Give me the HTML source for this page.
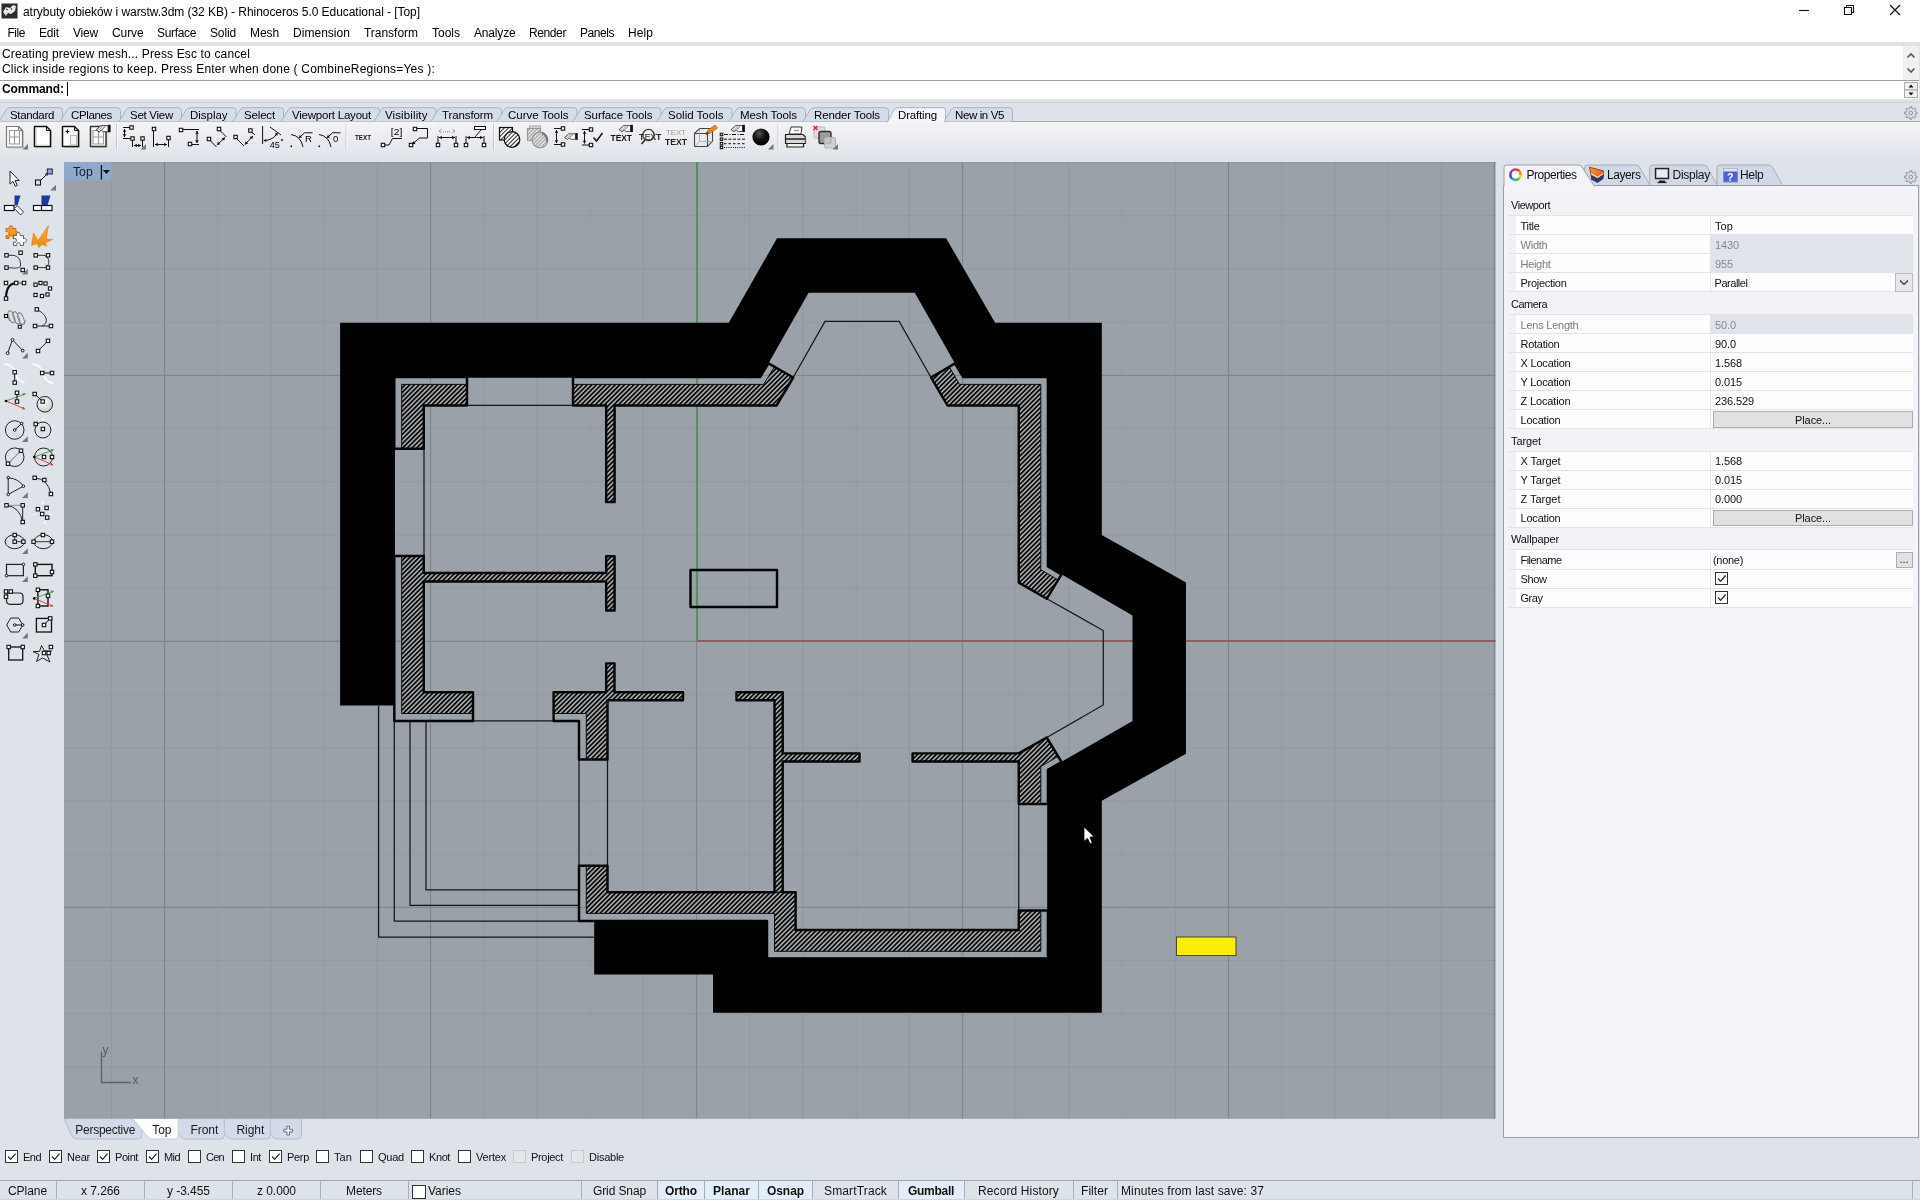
<!DOCTYPE html><html><head><meta charset="utf-8"><title>Rhinoceros 5.0 Educational</title><style>
html,body{margin:0;padding:0}
body{width:1920px;height:1200px;position:relative;overflow:hidden;background:#dee2e9;font-family:"Liberation Sans",sans-serif;font-size:12px;color:#000}
.t{position:absolute;white-space:pre;line-height:20px;height:20px}
.b{position:absolute;box-sizing:border-box}
svg{position:absolute;overflow:visible}
.vp{overflow:hidden}
</style></head><body><div id="app" style="position:absolute;left:0;top:0;width:1920px;height:1200px;will-change:transform">
<div class="b" style="left:0;top:0;width:1920px;height:42px;background:#fff"></div>
<svg style="left:1px;top:3px" width="18" height="16" viewBox="0 0 18 16"><rect x="0.5" y="0.5" width="16" height="15" fill="#2b2b2b"/><path d="M2 9l3-5 4 1 3-3 3 1-1 5-4 3-3-1-2 3z" fill="#e8e8e8"/><path d="M5 6l2 1M10 5l1 2" stroke="#333" stroke-width="1"/></svg>
<span class="t " id="title" style="left:23px;top:1.5px;font-size:12px;color:#000;letter-spacing:-0.052px;">atrybuty obieków i warstw.3dm (32 KB) - Rhinoceros 5.0 Educational - [Top]</span>
<svg style="left:1790px;top:0" width="130" height="22" viewBox="1790 0 130 22"><path d="M1799 10.5h10" stroke="#111" stroke-width="1.1"/><path d="M1844.5 7.5h7v7h-7zM1846.5 7.5v-2h7v7h-2" fill="none" stroke="#111" stroke-width="1.1"/><path d="M1890 5l10 10M1900 5l-10 10" stroke="#111" stroke-width="1.2"/></svg>
<span class="t " id="m0" style="left:7.5px;top:23px;font-size:12px;color:#000;letter-spacing:-0.461px;">File</span>
<span class="t " id="m1" style="left:39px;top:23px;font-size:12px;color:#000;letter-spacing:-0.172px;">Edit</span>
<span class="t " id="m2" style="left:73px;top:23px;font-size:12px;color:#000;letter-spacing:-0.199px;">View</span>
<span class="t " id="m3" style="left:112px;top:23px;font-size:12px;color:#000;letter-spacing:-0.103px;">Curve</span>
<span class="t " id="m4" style="left:157px;top:23px;font-size:12px;color:#000;letter-spacing:-0.337px;">Surface</span>
<span class="t " id="m5" style="left:210px;top:23px;font-size:12px;color:#000;letter-spacing:-0.138px;">Solid</span>
<span class="t " id="m6" style="left:250px;top:23px;font-size:12px;color:#000;letter-spacing:-0.086px;">Mesh</span>
<span class="t " id="m7" style="left:293px;top:23px;font-size:12px;color:#000;letter-spacing:0.033px;">Dimension</span>
<span class="t " id="m8" style="left:364px;top:23px;font-size:12px;color:#000;letter-spacing:-0.026px;">Transform</span>
<span class="t " id="m9" style="left:432px;top:23px;font-size:12px;color:#000;letter-spacing:-0.003px;">Tools</span>
<span class="t " id="m10" style="left:474px;top:23px;font-size:12px;color:#000;letter-spacing:-0.172px;">Analyze</span>
<span class="t " id="m11" style="left:529px;top:23px;font-size:12px;color:#000;letter-spacing:-0.393px;">Render</span>
<span class="t " id="m12" style="left:580px;top:23px;font-size:12px;color:#000;letter-spacing:-0.451px;">Panels</span>
<span class="t " id="m13" style="left:628px;top:23px;font-size:12px;color:#000;letter-spacing:0.078px;">Help</span>
<div class="b" style="left:0;top:42px;width:1920px;height:80px;background:#dee2e9"></div>
<div class="b" style="left:0;top:46px;width:1919px;height:34px;background:#fff"></div>
<div class="b" style="left:1903px;top:46px;width:16px;height:34px;background:#f0f0f0"></div>
<svg style="left:1903px;top:46px" width="16" height="34" viewBox="0 0 16 34"><path d="M4.5 11.5l3.5-3.5 3.5 3.5M4.5 22.5l3.5 3.5 3.5-3.5" fill="none" stroke="#555" stroke-width="1.6"/></svg>
<div class="b" style="left:0;top:80px;width:1919px;height:1px;background:#9aa0a8"></div>
<div class="b" style="left:0;top:81px;width:1919px;height:17.5px;background:#fff"></div>
<svg style="left:1904px;top:82px" width="14" height="16" viewBox="0 0 14 16"><rect x="0.5" y="0.5" width="13" height="7.5" fill="#f0f0f0" stroke="#aaa"/><rect x="0.5" y="8" width="13" height="7.5" fill="#f0f0f0" stroke="#aaa"/><path d="M4.5 5.5l2.5-3 2.5 3zM4.5 10.5l2.5 3 2.5-3z" fill="#111"/></svg>
<span class="t " id="c1" style="left:2px;top:43.5px;font-size:12px;color:#000;letter-spacing:0.149px;">Creating preview mesh... Press Esc to cancel</span>
<span class="t " id="c2" style="left:2px;top:58.5px;font-size:12px;color:#000;letter-spacing:0.207px;">Click inside regions to keep. Press Enter when done ( CombineRegions=Yes ):</span>
<span class="t " id="c3" style="left:2px;top:78.5px;font-size:12px;color:#000;font-weight:bold;letter-spacing:-0.084px;">Command:</span>
<div class="b" style="left:67px;top:82px;width:1px;height:14px;background:#000"></div>
<svg style="left:0;top:100px" width="1920" height="60" viewBox="0 100 1920 60">
<defs><linearGradient id="tbg" x1="0" y1="0" x2="0" y2="1"><stop offset="0" stop-color="#f3f4f5"/><stop offset="0.45" stop-color="#eaecef"/><stop offset="1" stop-color="#dee2e9"/></linearGradient></defs>
<rect x="0" y="122" width="1920" height="39" fill="url(#tbg)"/><path d="M0 102.3H1920" stroke="#cdd1d8" stroke-width="1"/>
<path d="M0 121.5H1920" stroke="#a4a9b1" stroke-width="1"/>
<path d="M-1 121.5 L6.5 109.3 Q7.5 107.7 10 107.7 H59.5 Q62.5 107.7 62.5 110.7 V121.5" fill="#d5dcea" stroke="#aab2c1" stroke-width="1"/>
<path d="M60 121.5 L67.5 109.3 Q68.5 107.7 71 107.7 H117.5 Q120.5 107.7 120.5 110.7 V121.5" fill="#d5dcea" stroke="#aab2c1" stroke-width="1"/>
<path d="M119 121.5 L126.5 109.3 Q127.5 107.7 130 107.7 H178.5 Q181.5 107.7 181.5 110.7 V121.5" fill="#d5dcea" stroke="#aab2c1" stroke-width="1"/>
<path d="M179 121.5 L186.5 109.3 Q187.5 107.7 190 107.7 H233.0 Q236.0 107.7 236.0 110.7 V121.5" fill="#d5dcea" stroke="#aab2c1" stroke-width="1"/>
<path d="M233 121.5 L240.5 109.3 Q241.5 107.7 244 107.7 H280.5 Q283.5 107.7 283.5 110.7 V121.5" fill="#d5dcea" stroke="#aab2c1" stroke-width="1"/>
<path d="M281 121.5 L288.5 109.3 Q289.5 107.7 292 107.7 H376.5 Q379.5 107.7 379.5 110.7 V121.5" fill="#d5dcea" stroke="#aab2c1" stroke-width="1"/>
<path d="M374 121.5 L381.5 109.3 Q382.5 107.7 385 107.7 H433.0 Q436.0 107.7 436.0 110.7 V121.5" fill="#d5dcea" stroke="#aab2c1" stroke-width="1"/>
<path d="M431 121.5 L438.5 109.3 Q439.5 107.7 442 107.7 H498.5 Q501.5 107.7 501.5 110.7 V121.5" fill="#d5dcea" stroke="#aab2c1" stroke-width="1"/>
<path d="M497 121.5 L504.5 109.3 Q505.5 107.7 508 107.7 H574.0 Q577.0 107.7 577.0 110.7 V121.5" fill="#d5dcea" stroke="#aab2c1" stroke-width="1"/>
<path d="M573 121.5 L580.5 109.3 Q581.5 107.7 584 107.7 H658.0 Q661.0 107.7 661.0 110.7 V121.5" fill="#d5dcea" stroke="#aab2c1" stroke-width="1"/>
<path d="M657 121.5 L664.5 109.3 Q665.5 107.7 668 107.7 H729.0 Q732.0 107.7 732.0 110.7 V121.5" fill="#d5dcea" stroke="#aab2c1" stroke-width="1"/>
<path d="M729 121.5 L736.5 109.3 Q737.5 107.7 740 107.7 H802.5 Q805.5 107.7 805.5 110.7 V121.5" fill="#d5dcea" stroke="#aab2c1" stroke-width="1"/>
<path d="M803 121.5 L810.5 109.3 Q811.5 107.7 814 107.7 H885.5 Q888.5 107.7 888.5 110.7 V121.5" fill="#d5dcea" stroke="#aab2c1" stroke-width="1"/>
<path d="M887 122.6 L894.5 109.3 Q895.5 107.7 898 107.7 H942.5 Q945.5 107.7 945.5 110.7 V122.6" fill="#f4f5f8" stroke="#aab2c1" stroke-width="1"/>
<path d="M944 121.5 L951.5 109.3 Q952.5 107.7 955 107.7 H1009.5 Q1012.5 107.7 1012.5 110.7 V121.5" fill="#d5dcea" stroke="#aab2c1" stroke-width="1"/>
</svg>
<span class="t " id="tb0" style="left:10px;top:105px;font-size:11.5px;color:#000;letter-spacing:-0.336px;">Standard</span>
<span class="t " id="tb1" style="left:71px;top:105px;font-size:11.5px;color:#000;letter-spacing:-0.353px;">CPlanes</span>
<span class="t " id="tb2" style="left:130px;top:105px;font-size:11.5px;color:#000;letter-spacing:-0.273px;">Set View</span>
<span class="t " id="tb3" style="left:190px;top:105px;font-size:11.5px;color:#000;letter-spacing:-0.031px;">Display</span>
<span class="t " id="tb4" style="left:244px;top:105px;font-size:11.5px;color:#000;letter-spacing:-0.161px;">Select</span>
<span class="t " id="tb5" style="left:292px;top:105px;font-size:11.5px;color:#000;letter-spacing:-0.218px;">Viewport Layout</span>
<span class="t " id="tb6" style="left:385px;top:105px;font-size:11.5px;color:#000;letter-spacing:0.117px;">Visibility</span>
<span class="t " id="tb7" style="left:442px;top:105px;font-size:11.5px;color:#000;letter-spacing:-0.109px;">Transform</span>
<span class="t " id="tb8" style="left:508px;top:105px;font-size:11.5px;color:#000;letter-spacing:-0.001px;">Curve Tools</span>
<span class="t " id="tb9" style="left:584px;top:105px;font-size:11.5px;color:#000;letter-spacing:-0.075px;">Surface Tools</span>
<span class="t " id="tb10" style="left:668px;top:105px;font-size:11.5px;color:#000;letter-spacing:0.009px;">Solid Tools</span>
<span class="t " id="tb11" style="left:740px;top:105px;font-size:11.5px;color:#000;letter-spacing:-0.097px;">Mesh Tools</span>
<span class="t " id="tb12" style="left:814px;top:105px;font-size:11.5px;color:#000;letter-spacing:-0.130px;">Render Tools</span>
<span class="t " id="tb13" style="left:898px;top:105px;font-size:11.5px;color:#000;letter-spacing:-0.160px;">Drafting</span>
<span class="t " id="tb14" style="left:955px;top:105px;font-size:11.5px;color:#000;letter-spacing:-0.380px;">New in V5</span>
<svg style="left:0;top:0" width="1920" height="200" viewBox="0 0 1920 200"><path d="M1917.05 112.18L1917.05 113.82L1915.15 114.16L1914.71 115.24L1915.79 116.84L1914.64 117.99L1913.06 116.89L1911.98 117.34L1911.62 119.25L1909.98 119.25L1909.64 117.35L1908.56 116.91L1906.96 117.99L1905.81 116.84L1906.91 115.26L1906.46 114.18L1904.55 113.82L1904.55 112.18L1906.45 111.84L1906.89 110.76L1905.81 109.16L1906.96 108.01L1908.54 109.11L1909.62 108.66L1909.98 106.75L1911.62 106.75L1911.96 108.65L1913.04 109.09L1914.64 108.01L1915.79 109.16L1914.69 110.74L1915.14 111.82Z" fill="none" stroke="#8b8f96" stroke-width="1"/><circle cx="1910.8" cy="113" r="1.8" fill="none" stroke="#8b8f96" stroke-width="1"/><path d="M1917.05 176.18L1917.05 177.82L1915.15 178.16L1914.71 179.24L1915.79 180.84L1914.64 181.99L1913.06 180.89L1911.98 181.34L1911.62 183.25L1909.98 183.25L1909.64 181.35L1908.56 180.91L1906.96 181.99L1905.81 180.84L1906.91 179.26L1906.46 178.18L1904.55 177.82L1904.55 176.18L1906.45 175.84L1906.89 174.76L1905.81 173.16L1906.96 172.01L1908.54 173.11L1909.62 172.66L1909.98 170.75L1911.62 170.75L1911.96 172.65L1913.04 173.09L1914.64 172.01L1915.79 173.16L1914.69 174.74L1915.14 175.82Z" fill="none" stroke="#8b8f96" stroke-width="1"/><circle cx="1910.8" cy="177" r="1.8" fill="none" stroke="#8b8f96" stroke-width="1"/></svg>
<svg style="left:0;top:120px" width="860" height="36" viewBox="0 120 860 36" font-family="Liberation Sans, sans-serif">
<defs><pattern id="ih" patternUnits="userSpaceOnUse" width="2.9" height="6" patternTransform="rotate(45)"><rect width="2.9" height="6" fill="#fff"/><rect width="0.95" height="6" fill="#222"/></pattern>
<pattern id="ihg" patternUnits="userSpaceOnUse" width="2.6" height="6" patternTransform="rotate(45)"><rect width="2.6" height="6" fill="#e4e4e4"/><rect width="1" height="6" fill="#999"/></pattern>
<radialGradient id="ball" cx="0.4" cy="0.3" r="0.7"><stop offset="0" stop-color="#555"/><stop offset="0.5" stop-color="#111"/><stop offset="1" stop-color="#000"/></radialGradient></defs>
<path d="M116.5 124V150" stroke="#c3c7cf" stroke-width="1"/><path d="M117.5 124V150" stroke="#f8f9fb" stroke-width="1"/>
<path d="M346 124V150" stroke="#c3c7cf" stroke-width="1"/><path d="M347 124V150" stroke="#f8f9fb" stroke-width="1"/>
<path d="M493.5 124V150" stroke="#c3c7cf" stroke-width="1"/><path d="M494.5 124V150" stroke="#f8f9fb" stroke-width="1"/>
<path d="M778 124V150" stroke="#c3c7cf" stroke-width="1"/><path d="M779 124V150" stroke="#f8f9fb" stroke-width="1"/>
<path d="M8.0 128.0H20.0L24.0 132.0V148.5H8.0Z" fill="#c9ccd2"/><path d="M6.5 126.5H18.5L22.5 130.5V147.0H6.5Z" fill="#fff" stroke="#777" stroke-width="1.2" stroke-linejoin="round"/><path d="M18.5 126.5V130.5H22.5" fill="none" stroke="#777" stroke-width="1"/>
<path d="M9.5 130.5H19.5V144H9.5ZM14.5 130.5V144M9.5 137H19.5" fill="none" stroke="#9a9a9a" stroke-width="1.2" />
<path d="M28 144.0V149.5H22.5Z" fill="#777"/>
<path d="M36.0 128.0H48.0L52.0 132.0V148.0H36.0Z" fill="#c9ccd2"/><path d="M34.5 126.5H46.5L50.5 130.5V146.5H34.5Z" fill="#fff" stroke="#111" stroke-width="1.5" stroke-linejoin="round"/><path d="M46.5 126.5V130.5H50.5" fill="none" stroke="#111" stroke-width="1"/>
<path d="M36.5 128.5V145H48.5" fill="none" stroke="#ddd" stroke-width="1" />
<path d="M64.0 128.0H76.0L80.0 132.0V148.0H64.0Z" fill="#c9ccd2"/><path d="M62.5 126.5H74.5L78.5 130.5V146.5H62.5Z" fill="#fff" stroke="#111" stroke-width="1.5" stroke-linejoin="round"/><path d="M74.5 126.5V130.5H78.5" fill="none" stroke="#111" stroke-width="1"/>
<path d="M65.5 131.5H69.5M67.5 129.5V133.5" fill="none" stroke="#111" stroke-width="1.2" />
<rect x="70.5" y="135.5" width="6" height="9.5" fill="#f4f4f4" stroke="#b5b5b5"/>
<path d="M92.0 128.0H103.5L107.5 132.0V148.0H92.0Z" fill="#c9ccd2"/><path d="M90.5 126.5H102.0L106.0 130.5V146.5H90.5Z" fill="#fff" stroke="#333" stroke-width="1.5" stroke-linejoin="round"/><path d="M102.0 126.5V130.5H106.0" fill="none" stroke="#333" stroke-width="1"/>
<path d="M93 130.5H103.5V144H93ZM98.5 130.5V144M93 137H103.5" fill="none" stroke="#9a9a9a" stroke-width="1.2" />
<g transform="translate(96 124.8) scale(1.05)"><path d="M0 4.8L4.6 0.8H11.5V6.6H7L5.2 5.2L3 6.8Z" fill="#fff" stroke="#222" stroke-width="0.8" stroke-linejoin="round"/><path d="M0.6 4.8l4-3.6M2 5.6l4.6-4.2M3.6 6l5-4.6M5.6 5l3.6-3.4" stroke="#777" stroke-width="0.7" fill="none"/><rect x="11.5" y="0" width="2.4" height="7.2" fill="#111"/></g>
<path d="M123 127.5H130M123 138.5H131M132.5 140V147M142.5 140V147" fill="none" stroke="#111" stroke-width="1" />
<rect x="129.8" y="125.8" width="3.4" height="3.4" fill="#fff" stroke="#111" stroke-width="1.1"/>
<rect x="130.8" y="136.8" width="3.4" height="3.4" fill="#fff" stroke="#111" stroke-width="1.1"/>
<rect x="140.8" y="136.8" width="3.4" height="3.4" fill="#fff" stroke="#111" stroke-width="1.1"/>
<path d="M124.50 129.00L124.50 137.00" fill="none" stroke="#111" stroke-width="1" /><path d="M124.50 129.00L122.74 131.86L126.26 131.86ZM124.50 137.00L122.74 134.14L126.26 134.14Z" fill="#111" />
<path d="M134.00 145.50L141.00 145.50" fill="none" stroke="#111" stroke-width="1" /><path d="M134.00 145.50L136.86 147.26L136.86 143.74ZM141.00 145.50L138.14 147.26L138.14 143.74Z" fill="#111" />
<path d="M146 144.0V149.5H140.5Z" fill="#777"/>
<path d="M153.5 131V147M168.5 140V147" fill="none" stroke="#111" stroke-width="1" />
<rect x="152.3" y="127.3" width="3.4" height="3.4" fill="#fff" stroke="#111" stroke-width="1.1"/>
<rect x="166.8" y="136.3" width="3.4" height="3.4" fill="#fff" stroke="#111" stroke-width="1.1"/>
<path d="M155.00 144.50L167.00 144.50" fill="none" stroke="#111" stroke-width="1" /><path d="M155.00 144.50L157.86 146.26L157.86 142.74ZM167.00 144.50L164.14 146.26L164.14 142.74Z" fill="#111" />
<path d="M183 129.5H199M192 144.5H199" fill="none" stroke="#111" stroke-width="1" />
<rect x="179.3" y="128.3" width="3.4" height="3.4" fill="#fff" stroke="#111" stroke-width="1.1"/>
<rect x="188.3" y="142.3" width="3.4" height="3.4" fill="#fff" stroke="#111" stroke-width="1.1"/>
<path d="M197.00 131.00L197.00 143.00" fill="none" stroke="#111" stroke-width="1" /><path d="M197.00 131.00L195.24 133.86L198.76 133.86ZM197.00 143.00L195.24 140.14L198.76 140.14Z" fill="#111" />
<path d="M220.5 131L226.5 137M210.5 141L216.5 147" fill="none" stroke="#111" stroke-width="1" />
<rect x="217.3" y="127.3" width="3.4" height="3.4" fill="#fff" stroke="#111" stroke-width="1.1"/>
<rect x="207.3" y="137.3" width="3.4" height="3.4" fill="#fff" stroke="#111" stroke-width="1.1"/>
<path d="M217.00 145.00L225.00 137.50" fill="none" stroke="#111" stroke-width="1" /><path d="M217.00 145.00L220.29 144.33L217.88 141.76ZM225.00 137.50L224.12 140.74L221.71 138.17Z" fill="#111" />
<path d="M237 139L244 146M251.5 132L255 135" fill="none" stroke="#111" stroke-width="1" />
<rect x="233.9" y="135.3" width="3.4" height="3.4" fill="#fff" stroke="#111" stroke-width="1.1"/>
<rect x="248.7" y="128.8" width="3.4" height="3.4" fill="#fff" stroke="#111" stroke-width="1.1"/>
<path d="M245.00 144.50L253.00 136.00" fill="none" stroke="#111" stroke-width="1" /><path d="M245.00 144.50L248.24 143.62L245.68 141.21ZM253.00 136.00L252.32 139.29L249.76 136.88Z" fill="#111" />
<path d="M262.6 126V144M270 127L281 135" fill="none" stroke="#111" stroke-width="1" />
<path d="M265 140.5Q273 140 277 133.5" fill="none" stroke="#111" stroke-width="1" />
<path d="M263.2 140.5l3-1.6v3.2zM277.6 132.5l-0.3 3.4-2.6-1.8z" fill="#111" />
<text x="269.8" y="147.8" font-size="9" fill="#000">45</text><path d="M281.3 139.3h1.4v1.4h-1.4z" fill="none" stroke="#111" stroke-width="0.7" />
<path d="M291 134.5Q301 136 303 147" fill="none" stroke="#111" stroke-width="1" />
<path d="M290.5 145.5h1.6v1.6h-1.6z" fill="#111" />
<path d="M299.5 137.5L304.5 132.8H312.5" fill="none" stroke="#111" stroke-width="1" />
<path d="M298.8 138l1-3.2 2 2.8z" fill="#111" />
<text x="305" y="141.8" font-size="9.5" fill="#000">R</text>
<path d="M319 134.5Q329 136 331 147" fill="none" stroke="#111" stroke-width="1" />
<path d="M318.5 145.5h1.6v1.6h-1.6z" fill="#111" />
<path d="M327.5 137.5L332.5 132.8H340.5" fill="none" stroke="#111" stroke-width="1" />
<path d="M326.8 138l1-3.2 2 2.8z" fill="#111" />
<text x="333" y="141.8" font-size="9.5" fill="#000">0</text>
<text x="355" y="139.5" font-size="6.6" font-weight="bold" fill="#111" textLength="16" lengthAdjust="spacingAndGlyphs">TEXT</text>
<path d="M384.5 145H389L392.5 138.5H402" fill="none" stroke="#111" stroke-width="1" />
<rect x="381.3" y="143.3" width="3.4" height="3.4" fill="#fff" stroke="#111" stroke-width="1.1"/>
<text x="390.8" y="135" font-size="9.5" fill="#000" textLength="11.5" lengthAdjust="spacingAndGlyphs">[2]</text>
<path d="M416.5 128.5H427.5V138H419.5L412.5 144" fill="none" stroke="#111" stroke-width="1" />
<rect x="413.3" y="127.3" width="3.4" height="3.4" fill="#fff" stroke="#111" stroke-width="1.1"/>
<rect x="409.3" y="143.3" width="3.4" height="3.4" fill="#fff" stroke="#111" stroke-width="1.1"/>
<path d="M412 144.5l1.2-3.4 2.3 2.6z" fill="#111" />
<path d="M438 136V143M456 136V143" fill="none" stroke="#111" stroke-width="1" />
<rect x="436.3" y="143.3" width="3.4" height="3.4" fill="#fff" stroke="#111" stroke-width="1.1"/>
<rect x="454.3" y="143.3" width="3.4" height="3.4" fill="#fff" stroke="#111" stroke-width="1.1"/>
<path d="M439.00 137.50L455.00 137.50" fill="none" stroke="#111" stroke-width="1" /><path d="M439.00 137.50L441.86 139.26L441.86 135.74ZM455.00 137.50L452.14 139.26L452.14 135.74Z" fill="#111" />
<path d="M441.5 129.5l-2.5 1.7 2.5 1.7M452.5 129.5l2.5 1.7-2.5 1.7" fill="none" stroke="#777" stroke-width="0.8" /><path d="M443 131.8h8" fill="none" stroke="#777" stroke-width="1" stroke-dasharray="1 1"/>
<path d="M466 136V143M484 136V143M481 130L474.5 137.5" fill="none" stroke="#111" stroke-width="1" />
<rect x="464.3" y="143.3" width="3.4" height="3.4" fill="#fff" stroke="#111" stroke-width="1.1"/>
<rect x="482.3" y="143.3" width="3.4" height="3.4" fill="#fff" stroke="#111" stroke-width="1.1"/>
<path d="M467.00 137.50L483.00 137.50" fill="none" stroke="#111" stroke-width="1" /><path d="M467.00 137.50L469.86 139.26L469.86 135.74ZM483.00 137.50L480.14 139.26L480.14 135.74Z" fill="#111" />
<rect x="474.5" y="126.5" width="11" height="3" fill="#fff" stroke="#111"/>
<rect x="499.5" y="127.5" width="13" height="12.5" fill="url(#ih)" stroke="#111" stroke-width="1.2"/><circle cx="512" cy="139.5" r="7.8" fill="url(#ih)" stroke="#111" stroke-width="1.2"/>
<rect x="529.5" y="126" width="11" height="10" fill="#d8d8d8" stroke="#aaa"/><rect x="527.5" y="128.5" width="13" height="12" fill="url(#ihg)" stroke="#999" stroke-width="1.2"/><circle cx="540" cy="140" r="7.8" fill="url(#ihg)" stroke="#999" stroke-width="1.2"/><path d="M542 133a8 8 0 0 1 5 9" fill="none" stroke="#777" stroke-width="2"/>
<path d="M554 128.5H561M554 144.5H561" fill="none" stroke="#111" stroke-width="1" />
<rect x="561.3" y="126.8" width="3.4" height="3.4" fill="#fff" stroke="#111" stroke-width="1.1"/>
<rect x="561.3" y="142.8" width="3.4" height="3.4" fill="#fff" stroke="#111" stroke-width="1.1"/>
<path d="M556.50 130.00L556.50 143.00" fill="none" stroke="#111" stroke-width="1" /><path d="M556.50 130.00L554.74 132.86L558.26 132.86ZM556.50 143.00L554.74 140.14L558.26 140.14Z" fill="#111" />
<g transform="translate(564.5 133) scale(0.95)"><path d="M0 4.8L4.6 0.8H11.5V6.6H7L5.2 5.2L3 6.8Z" fill="#fff" stroke="#222" stroke-width="0.8" stroke-linejoin="round"/><path d="M0.6 4.8l4-3.6M2 5.6l4.6-4.2M3.6 6l5-4.6M5.6 5l3.6-3.4" stroke="#777" stroke-width="0.7" fill="none"/><rect x="11.5" y="0" width="2.4" height="7.2" fill="#111"/></g>
<path d="M582 129.5H589M582 145H589" fill="none" stroke="#111" stroke-width="1" />
<rect x="589.3" y="127.8" width="3.4" height="3.4" fill="#fff" stroke="#111" stroke-width="1.1"/>
<rect x="589.3" y="143.3" width="3.4" height="3.4" fill="#fff" stroke="#111" stroke-width="1.1"/>
<path d="M584.50 131.00L584.50 143.50" fill="none" stroke="#111" stroke-width="1" /><path d="M584.50 131.00L582.74 133.86L586.26 133.86ZM584.50 143.50L582.74 140.64L586.26 140.64Z" fill="#111" />
<path d="M593.5 137.5l3 3.5 6-8" fill="none" stroke="#111" stroke-width="1.5" />
<text x="610.5" y="141" font-size="9.5" font-weight="bold" fill="#111" textLength="21.5" lengthAdjust="spacingAndGlyphs">TEXT</text>
<g transform="translate(619 124.8) scale(1.0)"><path d="M0 4.8L4.6 0.8H11.5V6.6H7L5.2 5.2L3 6.8Z" fill="#fff" stroke="#222" stroke-width="0.8" stroke-linejoin="round"/><path d="M0.6 4.8l4-3.6M2 5.6l4.6-4.2M3.6 6l5-4.6M5.6 5l3.6-3.4" stroke="#777" stroke-width="0.7" fill="none"/><rect x="11.5" y="0" width="2.4" height="7.2" fill="#111"/></g>
<text x="639" y="139.5" font-size="9.5" font-weight="bold" fill="#2a2a2a" textLength="22.5" lengthAdjust="spacingAndGlyphs">TEXT</text>
<circle cx="648.5" cy="135" r="5.6" fill="rgba(255,255,255,0.25)" stroke="#333" stroke-width="1.2"/><path d="M645 140L641.5 144" fill="none" stroke="#333" stroke-width="1.8" />
<text x="666" y="135" font-size="7" fill="#9a9a9a" textLength="20" lengthAdjust="spacingAndGlyphs">TEXT</text>
<text x="665" y="145" font-size="9.5" font-weight="bold" fill="#222" textLength="22" lengthAdjust="spacingAndGlyphs">TEXT</text>
<path d="M694.5 133.5L699.5 128.5H712.5V141L707.5 146.5H694.5ZM694.5 133.5H707.5V146.5M707.5 133.5L712.5 128.5" fill="none" stroke="#444" stroke-width="1.1" fill="#f4f4f4"/>
<path d="M699.5 128.5V141.5H712M699.5 141.5L694.5 146.5" fill="none" stroke="#aaa" stroke-width="0.8" />
<path d="M706 134.5L707.5 130.5L715 125L717.5 128L709.5 133.5Z" fill="#f08a1c" stroke="#a85a10" stroke-width="0.7"/><path d="M706 134.5l1.2-3 1.8 2z" fill="#333"/>
<g transform="translate(731 124.8) scale(1.0)"><path d="M0 4.8L4.6 0.8H11.5V6.6H7L5.2 5.2L3 6.8Z" fill="#fff" stroke="#222" stroke-width="0.8" stroke-linejoin="round"/><path d="M0.6 4.8l4-3.6M2 5.6l4.6-4.2M3.6 6l5-4.6M5.6 5l3.6-3.4" stroke="#777" stroke-width="0.7" fill="none"/><rect x="11.5" y="0" width="2.4" height="7.2" fill="#111"/></g>
<rect x="720.3" y="133.3" width="2.4" height="2.4" fill="#fff" stroke="#111" stroke-width="1.1"/>
<rect x="720.3" y="138" width="2.4" height="2.4" fill="#fff" stroke="#111" stroke-width="1.1"/>
<rect x="720.3" y="142.5" width="2.4" height="2.4" fill="#fff" stroke="#111" stroke-width="1.1"/>
<rect x="720.3" y="146.3" width="2.4" height="2.4" fill="#fff" stroke="#111" stroke-width="1.1"/>
<path d="M724 134.5H745" fill="none" stroke="#111" stroke-width="1" stroke-dasharray="4 1.5 1 1.5"/><path d="M724 139.2H745" fill="none" stroke="#111" stroke-width="1" stroke-dasharray="3 1.5"/><path d="M724 143.7H745" fill="none" stroke="#111" stroke-width="1" stroke-dasharray="2.5 2"/><path d="M724 147.5H745" fill="none" stroke="#111" stroke-width="1" stroke-dasharray="1 1.2"/>
<circle cx="761" cy="137" r="8.6" fill="url(#ball)"/>
<path d="M773.5 144.0V149.5H768.0Z" fill="#777"/>
<path d="M789 134L791 127H802L801 134Z" fill="#fff" stroke="#333" stroke-width="1"/><path d="M794 130.5h5" stroke="#999" stroke-width="1.4"/>
<path d="M785.5 134.5H803L805.5 137V143.5H785.5Z" fill="#d9d9d9" stroke="#222" stroke-width="1.2"/><path d="M785.5 139h20" stroke="#222" stroke-width="1.5"/><path d="M787 143.5H803.5V147H787Z" fill="#f2f2f2" stroke="#222" stroke-width="1.2"/><path d="M803 134.5l2.5 2.5v6.5" stroke="#555" fill="none"/>
<rect x="814" y="127" width="11" height="11" rx="1.5" fill="#dcdcdc" stroke="#b5b5b5"/><rect x="819" y="131.5" width="12" height="12" rx="2" fill="#9c9c9c" stroke="#2e2e2e" stroke-width="1.4"/><rect x="824.5" y="137.5" width="11" height="10.5" rx="1.5" fill="rgba(205,205,205,0.85)" stroke="#b0b0b0"/>
<path d="M813.5 126l4 4M817.5 126l-4 4" fill="none" stroke="#e02020" stroke-width="1.3" />
<path d="M838 144.0V149.5H832.5Z" fill="#777"/>
</svg>
<svg style="left:0;top:165px" width="62" height="500" viewBox="0 165 62 500">
<defs><radialGradient id="sph" cx="0.4" cy="0.35" r="0.7"><stop offset="0" stop-color="#fff"/><stop offset="1" stop-color="#c8c8c8"/></radialGradient>
<linearGradient id="org" x1="0" y1="0" x2="0" y2="1"><stop offset="0" stop-color="#f7a928"/><stop offset="1" stop-color="#f08a10"/></linearGradient></defs>
<path d="M10 171V184.2L13 181.3L15.3 186.3L17.3 185.3L15 180.5H19.2Z" fill="#fff" stroke="#222" stroke-width="1" stroke-linejoin="round"/>
<path d="M40 181L47.5 173.5" fill="none" stroke="#111" stroke-width="1" /><path d="M48.3 172.7l-3.4 1 2.4 2.4z" fill="#111" />
<rect x="35.5" y="180" width="5" height="5" fill="#e0e0e0" stroke="#111" stroke-width="1.1"/>
<rect x="47.3" y="169" width="5" height="5" fill="#8aa2ee" stroke="#333" stroke-width="1.1"/>
<path d="M56 184.7V190.5H50.2Z" fill="#777"/>
<path d="M14.5 195.5H20.5L17.5 205.5H14.5Z" fill="#1c3a9a"/><rect x="4.5" y="205.5" width="9.5" height="5" fill="#fff" stroke="#111" stroke-width="1.2"/><path d="M14.5 208.5L17.5 205.8L23.5 212L20.5 215Z" fill="#fff" stroke="#444" stroke-width="1"/>
<path d="M41.5 195.5H50.5L47.5 205.5H41.5Z" fill="#1c3a9a"/><rect x="33.5" y="205.5" width="18.5" height="5" fill="#fff" stroke="#111" stroke-width="1.2"/><path d="M41.5 205.5v5" stroke="#111" stroke-width="1.2"/>
<path d="M6 228.5h3.2a2 2 0 1 1 3.6 0h3.2v3.4a2 2 0 1 1 0 3.6v3H12.8a2 2 0 1 0-3.6 0H6v-3.2a2 2 0 1 0 0-3.6z" fill="url(#org)" stroke="#b86a08" stroke-width="0.8"/>
<path d="M13.5 235.5h3a2 2 0 1 1 3.6 0h3.4v3.2a2 2 0 1 1 0 3.6v3.2h-3.2a2 2 0 1 0-3.6 0h-3.2v-3.4a2 2 0 1 0 0-3.4z" fill="#fff" stroke="#555" stroke-width="0.9"/>
<path d="M31.5 245.5L33.5 233L38 240.5L48.5 225.5L46 239L52.5 239.5L45 243L47 246L41.5 244.5L39 247.5L37 243.5Z" fill="url(#org)" stroke="#e07e08" stroke-width="0.6"/>
<path d="M6.5 255.3H12C19 255.3 21 261 20.5 266C19 269 14 268 6.5 267.6" fill="none" stroke="#333" stroke-width="1" />
<rect x="4.8" y="253.6" width="3.4" height="3.4" fill="#fff" stroke="#111" stroke-width="1.1"/>
<rect x="18.9" y="251" width="3.4" height="3.4" fill="#fff" stroke="#111" stroke-width="1.1"/>
<rect x="4.8" y="265.9" width="3.4" height="3.4" fill="#fff" stroke="#111" stroke-width="1.1"/>
<rect x="21" y="268.3" width="3.4" height="3.4" fill="#fff" stroke="#111" stroke-width="1.1"/>
<path d="M27.8 268.7V274.5H22.0Z" fill="#777"/>
<path d="M35.7 255.3H44C50 256.5 50.5 266 45 267.6H35.7" fill="none" stroke="#333" stroke-width="1" />
<rect x="34" y="253.6" width="3.4" height="3.4" fill="#fff" stroke="#111" stroke-width="1.1"/>
<rect x="46.3" y="253.6" width="3.4" height="3.4" fill="#fff" stroke="#111" stroke-width="1.1"/>
<rect x="34" y="265.9" width="3.4" height="3.4" fill="#fff" stroke="#111" stroke-width="1.1"/>
<rect x="46.3" y="265.9" width="3.4" height="3.4" fill="#fff" stroke="#111" stroke-width="1.1"/>
<path d="M16.2 283H24" fill="none" stroke="#444" stroke-width="1" /><path d="M6 298.6C6 289 9.5 283.5 16.2 283" fill="none" stroke="#111" stroke-width="2.2" />
<rect x="4.3" y="281.3" width="3.4" height="3.4" fill="#fff" stroke="#111" stroke-width="1.1"/>
<rect x="14.5" y="281.3" width="3.4" height="3.4" fill="#fff" stroke="#111" stroke-width="1.1"/>
<rect x="22.3" y="281.3" width="3.4" height="3.4" fill="#fff" stroke="#111" stroke-width="1.1"/>
<rect x="4.3" y="296.9" width="3.4" height="3.4" fill="#fff" stroke="#111" stroke-width="1.1"/>
<rect x="33.9" y="283.1" width="3.2" height="3.2" fill="#fff" stroke="#111" stroke-width="1.1"/>
<rect x="38.9" y="281.4" width="3.2" height="3.2" fill="#fff" stroke="#111" stroke-width="1.1"/>
<rect x="43.9" y="281.9" width="3.2" height="3.2" fill="#fff" stroke="#111" stroke-width="1.1"/>
<rect x="48.4" y="286.9" width="3.2" height="3.2" fill="#fff" stroke="#111" stroke-width="1.1"/>
<rect x="45.9" y="292.9" width="3.2" height="3.2" fill="#fff" stroke="#111" stroke-width="1.1"/>
<rect x="40.4" y="294.4" width="3.2" height="3.2" fill="#fff" stroke="#111" stroke-width="1.1"/>
<rect x="33.9" y="293.4" width="3.2" height="3.2" fill="#fff" stroke="#111" stroke-width="1.1"/>
<g fill="none" stroke="#7d7d7d" stroke-width="0.9"><ellipse cx="11.5" cy="316.8" rx="2.6" ry="6.3" transform="rotate(-22 11.5 316.8)"/><ellipse cx="16.3" cy="317.8" rx="2.6" ry="6.3" transform="rotate(-22 16.3 317.8)"/><ellipse cx="21" cy="318.8" rx="2.6" ry="6.3" transform="rotate(-22 21 318.8)"/><path d="M7.5 316.5Q8.5 318 9.5 321M22.5 324Q24.5 323.5 25.8 320.5"/></g>
<rect x="4.5" y="314.5" width="3" height="3" fill="#fff" stroke="#111" stroke-width="1.1"/>
<rect x="18.3" y="325.2" width="3" height="3" fill="#fff" stroke="#111" stroke-width="1.1"/>
<path d="M36.8 309.4C46 314 50 322 42 326H35M42 326H51" fill="none" stroke="#222" stroke-width="1" />
<rect x="35.1" y="307.7" width="3.4" height="3.4" fill="#fff" stroke="#111" stroke-width="1.1"/>
<rect x="33.3" y="324.3" width="3.4" height="3.4" fill="#fff" stroke="#111" stroke-width="1.1"/>
<rect x="49.3" y="324.3" width="3.4" height="3.4" fill="#fff" stroke="#111" stroke-width="1.1"/>
<path d="M7.6 353.2L12.5 339.8L22.7 350.6" fill="none" stroke="#222" stroke-width="1" />
<circle cx="12.5" cy="339.8" r="1.4" fill="#fff" stroke="#111" stroke-width="1"/>
<circle cx="7.6" cy="353.2" r="1.4" fill="#fff" stroke="#111" stroke-width="1"/>
<circle cx="22.7" cy="350.6" r="1.4" fill="#fff" stroke="#111" stroke-width="1"/>
<path d="M27.8 352.7V358.5H22.0Z" fill="#777"/>
<path d="M38 351L48 340.8" fill="none" stroke="#222" stroke-width="1" />
<rect x="36.3" y="349.3" width="3.4" height="3.4" fill="#fff" stroke="#111" stroke-width="1.1"/>
<rect x="46.3" y="339.1" width="3.4" height="3.4" fill="#fff" stroke="#111" stroke-width="1.1"/>
<path d="M4.5 364Q14 365 15 372T24.5 383" fill="none" stroke="#fff" stroke-width="1.6" />
<path d="M14.7 372.2V382.6" fill="none" stroke="#111" stroke-width="1" />
<rect x="13" y="370.5" width="3.4" height="3.4" fill="#fff" stroke="#111" stroke-width="1.1"/>
<rect x="13" y="380.9" width="3.4" height="3.4" fill="#fff" stroke="#111" stroke-width="1.1"/>
<path d="M32.5 364Q41 365 43 373T53 383.5" fill="none" stroke="#fff" stroke-width="1.6" />
<path d="M42.2 373H52" fill="none" stroke="#111" stroke-width="1" />
<rect x="40.5" y="371.3" width="3.4" height="3.4" fill="#fff" stroke="#111" stroke-width="1.1"/>
<rect x="50.3" y="371.3" width="3.4" height="3.4" fill="#fff" stroke="#111" stroke-width="1.1"/>
<path d="M6 401L25 394" fill="none" stroke="#3a9a3a" stroke-width="0.9" /><path d="M26 393.5l-3.6 -0.3 1.2 2.6z" fill="#3a9a3a" /><path d="M6 401L24 408.5" fill="none" stroke="#d8392e" stroke-width="0.9" /><path d="M25.5 409.2l-3.6 0.2 1.3-2.6z" fill="#d8392e" /><circle cx="6" cy="401" r="1.3" fill="#111"/>
<path d="M17 392.8V401.5" fill="none" stroke="#111" stroke-width="1" />
<rect x="15.3" y="391.1" width="3.4" height="3.4" fill="#fff" stroke="#111" stroke-width="1.1"/>
<rect x="15.3" y="399.8" width="3.4" height="3.4" fill="#fff" stroke="#111" stroke-width="1.1"/>
<circle cx="44.8" cy="404.3" r="7.8" fill="url(#sph)" stroke="#222" stroke-width="1"/>
<path d="M34.7 394L42.7 401.5" fill="none" stroke="#111" stroke-width="1" />
<rect x="33" y="392.3" width="3.4" height="3.4" fill="#fff" stroke="#111" stroke-width="1.1"/>
<rect x="41" y="399.8" width="3.4" height="3.4" fill="#fff" stroke="#111" stroke-width="1.1"/>
<circle cx="14.7" cy="430" r="9.3" fill="none" stroke="#222" stroke-width="1"/>
<path d="M14.7 430L21.7 423.4" fill="none" stroke="#111" stroke-width="1" />
<circle cx="14.7" cy="430" r="1.3" fill="#fff" stroke="#111" stroke-width="1"/>
<circle cx="21.7" cy="423.4" r="1.3" fill="#fff" stroke="#111" stroke-width="1"/>
<path d="M27.8 436.2V442H22.0Z" fill="#777"/>
<path d="M42.9 418v3M42.9 439v3M52.5 426l-2 1M52.5 434l-2-1M33.5 434l2-1" fill="none" stroke="#fff" stroke-width="1.3" />
<circle cx="42.9" cy="430" r="8" fill="none" stroke="#222" stroke-width="1"/>
<rect x="34" y="422.3" width="3.4" height="3.4" fill="#fff" stroke="#111" stroke-width="1.1"/>
<rect x="41.2" y="427.3" width="3.4" height="3.4" fill="#fff" stroke="#111" stroke-width="1.1"/>
<circle cx="14.7" cy="457.2" r="9.3" fill="none" stroke="#222" stroke-width="1"/>
<path d="M8 463.7L21 450.7" fill="none" stroke="#555" stroke-width="0.8" />
<rect x="19.3" y="449" width="3.4" height="3.4" fill="#fff" stroke="#111" stroke-width="1.1"/>
<rect x="6.3" y="462" width="3.4" height="3.4" fill="#fff" stroke="#111" stroke-width="1.1"/>
<circle cx="43.5" cy="457" r="9" fill="none" stroke="#222" stroke-width="1"/>
<path d="M34.2 457L53.2 450" fill="none" stroke="#3a9a3a" stroke-width="0.9" /><path d="M54.2 449.5l-3.6 -0.3 1.2 2.6z" fill="#3a9a3a" /><path d="M34.2 457L52.2 464.5" fill="none" stroke="#d8392e" stroke-width="0.9" /><path d="M53.7 465.2l-3.6 0.2 1.3-2.6z" fill="#d8392e" /><circle cx="34.2" cy="457" r="1.3" fill="#111"/>
<rect x="42.3" y="455.3" width="3.4" height="3.4" fill="#fff" stroke="#111" stroke-width="1.1"/>
<rect x="50.3" y="455.3" width="3.4" height="3.4" fill="#fff" stroke="#111" stroke-width="1.1"/>
<path d="M8.2 477.6Q19 479 23.4 486.2L8.2 494.5Z" fill="none" stroke="#222" stroke-width="1" />
<circle cx="8.2" cy="477.6" r="1.3" fill="#fff" stroke="#111" stroke-width="1"/>
<circle cx="23.4" cy="486.2" r="1.3" fill="#fff" stroke="#111" stroke-width="1"/>
<circle cx="8.2" cy="494.5" r="1.3" fill="#fff" stroke="#111" stroke-width="1"/>
<path d="M27.8 492.2V498H22.0Z" fill="#777"/>
<path d="M34.7 477.8Q48 479 50.9 494" fill="none" stroke="#222" stroke-width="1" />
<rect x="33" y="476.1" width="3.4" height="3.4" fill="#fff" stroke="#111" stroke-width="1.1"/>
<rect x="42.7" y="478.3" width="3.4" height="3.4" fill="#fff" stroke="#111" stroke-width="1.1"/>
<rect x="49.2" y="492.3" width="3.4" height="3.4" fill="#fff" stroke="#111" stroke-width="1.1"/>
<path d="M6.5 505.3H22.7" fill="none" stroke="#777" stroke-width="0.7" /><path d="M6.5 505.3Q20 507 22.7 522M22.7 505.3V522" fill="none" stroke="#222" stroke-width="1" />
<rect x="4.8" y="503.6" width="3.4" height="3.4" fill="#fff" stroke="#111" stroke-width="1.1"/>
<rect x="21" y="503.6" width="3.4" height="3.4" fill="#fff" stroke="#111" stroke-width="1.1"/>
<rect x="21" y="520.3" width="3.4" height="3.4" fill="#fff" stroke="#111" stroke-width="1.1"/>
<path d="M42 501.5l1 3M33 515l3-1M52 515l-3-1M45 524v-3" fill="none" stroke="#fff" stroke-width="1.3" />
<rect x="36.2" y="507.5" width="3.4" height="3.4" fill="#fff" stroke="#111" stroke-width="1.1"/>
<rect x="44.9" y="506.2" width="3.4" height="3.4" fill="#fff" stroke="#111" stroke-width="1.1"/>
<rect x="40.5" y="512.3" width="3.4" height="3.4" fill="#fff" stroke="#111" stroke-width="1.1"/>
<rect x="45.5" y="515.9" width="3.4" height="3.4" fill="#fff" stroke="#111" stroke-width="1.1"/>
<ellipse cx="14.7" cy="541.7" rx="9.5" ry="7" fill="none" stroke="#222"/>
<path d="M14.7 535V541.7H23.4" fill="none" stroke="#333" stroke-width="1" />
<rect x="13" y="540" width="3.4" height="3.4" fill="#fff" stroke="#111" stroke-width="1.1"/>
<rect x="13" y="533.3" width="3.4" height="3.4" fill="#fff" stroke="#111" stroke-width="1.1"/>
<rect x="21.7" y="540" width="3.4" height="3.4" fill="#fff" stroke="#111" stroke-width="1.1"/>
<path d="M27.8 548.2V554H22.0Z" fill="#777"/>
<ellipse cx="43.3" cy="541.7" rx="9.3" ry="7" fill="none" stroke="#222"/>
<path d="M33.6 541.7H52" fill="none" stroke="#333" stroke-width="1" />
<rect x="31.9" y="540" width="3.4" height="3.4" fill="#fff" stroke="#111" stroke-width="1.1"/>
<rect x="50.3" y="540" width="3.4" height="3.4" fill="#fff" stroke="#111" stroke-width="1.1"/>
<rect x="41.2" y="533.3" width="3.4" height="3.4" fill="#fff" stroke="#111" stroke-width="1.1"/>
<rect x="6.5" y="564.4" width="16.9" height="11.3" fill="none" stroke="#222" stroke-width="1.2"/>
<circle cx="23.4" cy="564.4" r="1.3" fill="#fff" stroke="#111" stroke-width="1"/>
<circle cx="6.5" cy="575.7" r="1.3" fill="#fff" stroke="#111" stroke-width="1"/>
<path d="M27.8 576.2V582H22.0Z" fill="#777"/>
<rect x="35.3" y="564.4" width="16.7" height="11.3" fill="none" stroke="#111" stroke-width="1.4"/>
<rect x="33.6" y="562.7" width="3.4" height="3.4" fill="#fff" stroke="#111" stroke-width="1.1"/>
<rect x="33.6" y="574" width="3.4" height="3.4" fill="#fff" stroke="#111" stroke-width="1.1"/>
<rect x="50.3" y="570.3" width="3.4" height="3.4" fill="#fff" stroke="#111" stroke-width="1.1"/>
<rect x="6.5" y="593" width="16.5" height="11.3" rx="3.5" fill="none" stroke="#222" stroke-width="1.2"/>
<rect x="4.3" y="589.8" width="3.4" height="3.4" fill="#fff" stroke="#111" stroke-width="1.1"/>
<rect x="9.1" y="589.8" width="3.4" height="3.4" fill="#fff" stroke="#111" stroke-width="1.1"/>
<rect x="4.3" y="595" width="3.4" height="3.4" fill="#fff" stroke="#111" stroke-width="1.1"/>
<rect x="37.9" y="589.8" width="10.1" height="16.2" fill="none" stroke="#111" stroke-width="1.4"/>
<path d="M34.2 598.4L53.2 591.4" fill="none" stroke="#3a9a3a" stroke-width="0.9" /><path d="M54.2 590.9l-3.6 -0.3 1.2 2.6z" fill="#3a9a3a" /><path d="M34.2 598.4L52.2 605.9" fill="none" stroke="#d8392e" stroke-width="0.9" /><path d="M53.7 606.6l-3.6 0.2 1.3-2.6z" fill="#d8392e" /><circle cx="34.2" cy="598.4" r="1.3" fill="#111"/>
<rect x="36.2" y="588.1" width="3.4" height="3.4" fill="#fff" stroke="#111" stroke-width="1.1"/>
<rect x="46.3" y="594.1" width="3.4" height="3.4" fill="#fff" stroke="#111" stroke-width="1.1"/>
<rect x="36.2" y="604.3" width="3.4" height="3.4" fill="#fff" stroke="#111" stroke-width="1.1"/>
<path d="M6.7 625L10.7 618H18.7L22.7 625L18.7 632H10.7Z" fill="none" stroke="#222" stroke-width="1" />
<path d="M14.7 625H22.7" fill="none" stroke="#111" stroke-width="1" />
<circle cx="14.7" cy="625" r="1.3" fill="#fff" stroke="#111" stroke-width="1"/>
<circle cx="22.7" cy="625" r="1.3" fill="#fff" stroke="#111" stroke-width="1"/>
<path d="M27.8 632.7V638.5H22.0Z" fill="#777"/>
<rect x="36.4" y="618.4" width="15.1" height="13.6" fill="none" stroke="#111" stroke-width="1.3"/>
<path d="M44 625L50.2 618.4" fill="none" stroke="#111" stroke-width="1" />
<rect x="48.5" y="616.7" width="3.4" height="3.4" fill="#fff" stroke="#111" stroke-width="1.1"/>
<rect x="42.3" y="623.3" width="3.4" height="3.4" fill="#fff" stroke="#111" stroke-width="1.1"/>
<rect x="8.7" y="647" width="14" height="13" fill="none" stroke="#111" stroke-width="1.3"/>
<rect x="7" y="645.3" width="3.4" height="3.4" fill="#fff" stroke="#111" stroke-width="1.1"/>
<rect x="21" y="645.3" width="3.4" height="3.4" fill="#fff" stroke="#111" stroke-width="1.1"/>
<path d="M41.5 645.5L44.5 651H51.5L47 655L50 662L42.5 658L36.5 661.5L39 654.5L33 651.5H39.5Z" fill="none" stroke="#222" stroke-width="1" />
<rect x="49.2" y="645.3" width="3.4" height="3.4" fill="#fff" stroke="#111" stroke-width="1.1"/>
<rect x="42.3" y="651.3" width="3.4" height="3.4" fill="#fff" stroke="#111" stroke-width="1.1"/>
<rect x="47" y="651.3" width="3.4" height="3.4" fill="#fff" stroke="#111" stroke-width="1.1"/>
</svg>
<svg class="vp" style="position:absolute;left:64px;top:162px" width="1431.5" height="956.8" viewBox="64 162 1431.5 956.8">
<defs><pattern id="hat" patternUnits="userSpaceOnUse" width="3.3" height="8" patternTransform="rotate(45)"><rect x="0" y="0" width="3.3" height="8" fill="#b2b4b6"/><rect x="0" y="0" width="1.8" height="8" fill="#0a0a0a"/></pattern></defs>
<rect x="64" y="162" width="1431.5" height="956.8" fill="#9aa1a8"/>
<path d="M111.3 162V1118.8M217.7 162V1118.8M270.9 162V1118.8M324.1 162V1118.8M377.3 162V1118.8M483.7 162V1118.8M536.9 162V1118.8M590.1 162V1118.8M643.3 162V1118.8M749.7 162V1118.8M802.9 162V1118.8M856.1 162V1118.8M909.3 162V1118.8M1015.7 162V1118.8M1068.9 162V1118.8M1122.1 162V1118.8M1175.3 162V1118.8M1281.7 162V1118.8M1334.9 162V1118.8M1388.1 162V1118.8M1441.3 162V1118.8M64 162.5H1495.5M64 215.7H1495.5M64 268.9H1495.5M64 322.1H1495.5M64 428.5H1495.5M64 481.7H1495.5M64 534.9H1495.5M64 588.1H1495.5M64 694.5H1495.5M64 747.7H1495.5M64 800.9H1495.5M64 854.1H1495.5M64 960.5H1495.5M64 1013.7H1495.5M64 1066.9H1495.5" stroke="#939aa1" stroke-width="1" fill="none"/>
<path d="M164.5 162V1118.8M430.5 162V1118.8M696.5 162V1118.8M962.5 162V1118.8M1228.5 162V1118.8M1494.5 162V1118.8M64 375.3H1495.5M64 641.3H1495.5M64 907.3H1495.5" stroke="#7f868d" stroke-width="1.2" fill="none"/>
<path d="M697.1 162V641.8" stroke="#56905f" stroke-width="1.9" fill="none"/>
<path d="M697.5 640.85H1495.5" stroke="#8d5b5b" stroke-width="1.9" fill="none"/>
<path d="M467 405.5H573M424 448.75V556M473 721H553.6M579 759.5V865M607.5 759.5V865M1018.75 804V910M378.6 705.5V937.2H594M394.3 721V921.2H578M410 721V905.5H578M426 721V889.8H578M793.2 377.5L825 321.4H899.2L931 377.5M1046.75 598.8L1103.25 630.5V705L1046.75 737.5" stroke="#15171a" stroke-width="1.25" fill="none"/>
<polygon points="401.7,384.4 467,384.4 467,405.5 423.75,405.5 423.75,448.75 401.7,448.75" fill="url(#hat)" stroke="#0c0c0c" stroke-width="1"/>
<polygon points="573,384.4 763.5,384.4 774.4,367 793.2,377.5 776.5,405.5 614.6,405.5 614.6,502 606.2,502 606.2,405.5 573,405.5" fill="url(#hat)" stroke="#0c0c0c" stroke-width="1"/>
<polygon points="949.4,367 959.5,384.4 1040.8,384.4 1040.8,569.75 1057.75,579.7 1046.75,598.8 1018.75,582.6 1018.75,405.5 947.5,405.5 931,377.5" fill="url(#hat)" stroke="#0c0c0c" stroke-width="1"/>
<polygon points="1046.75,737.5 1018.75,753.4 912.6,753.4 912.6,761.6 1018.75,761.6 1018.75,804 1040.8,804 1040.8,766.5 1057.75,756.6" fill="url(#hat)" stroke="#0c0c0c" stroke-width="1"/>
<polygon points="586.3,865.75 607.5,865.75 607.5,892.3 795.6,892.3 795.6,930 1018.75,930 1018.75,910.5 1040.8,910.5 1040.8,951.3 774.5,951.3 774.5,913.4 586.3,913.4" fill="url(#hat)" stroke="#0c0c0c" stroke-width="1"/>
<polygon points="736.5,692.2 782.7,692.2 782.7,753.4 859.5,753.4 859.5,761.6 782.7,761.6 782.7,892.3 774.5,892.3 774.5,700.3 736.5,700.3" fill="url(#hat)" stroke="#0c0c0c" stroke-width="1"/>
<polygon points="401.7,556 423.75,556 423.75,573 606.2,573 606.2,556.2 614.6,556.2 614.6,610.5 606.2,610.5 606.2,581.5 423.75,581.5 423.75,692.2 473,692.2 473,713.5 401.7,713.5" fill="url(#hat)" stroke="#0c0c0c" stroke-width="1"/>
<polygon points="553.6,692.2 606.2,692.2 606.2,663.4 614.5,663.4 614.5,692.2 683,692.2 683,700.3 607.5,700.3 607.5,759.5 586.3,759.5 586.3,713.5 553.6,713.5" fill="url(#hat)" stroke="#0c0c0c" stroke-width="1"/>
<polygon points="394.3,377 467,377 467,405.5 423.75,405.5 423.75,448.75 394.3,448.75" fill="none" stroke="#050505" stroke-width="2.45" stroke-linejoin="round"/>
<polygon points="573,377 760,377 768.5,363.4 793.2,377.5 776.5,405.5 614.6,405.5 614.6,502 606.2,502 606.2,405.5 573,405.5" fill="none" stroke="#050505" stroke-width="2.45" stroke-linejoin="round"/>
<polygon points="955,363.4 931,377.5 947.5,405.5 1018.75,405.5 1018.75,582.6 1046.75,598.8 1061.5,574.4 1047.9,566.5 1047.9,377 963,377" fill="none" stroke="#050505" stroke-width="2.45" stroke-linejoin="round"/>
<polygon points="1046.75,737.5 1018.75,753.4 912.6,753.4 912.6,761.6 1018.75,761.6 1018.75,804 1047.9,804 1047.9,769.8 1061.5,762" fill="none" stroke="#050505" stroke-width="2.45" stroke-linejoin="round"/>
<polygon points="1018.75,910.5 1047.9,910.5 1047.9,958.5 767,958.5 767,921 579,921 579,865.75 607.5,865.75 607.5,892.3 774.5,892.3 774.5,700.3 736.5,700.3 736.5,692.2 782.7,692.2 782.7,753.4 859.5,753.4 859.5,761.6 782.7,761.6 782.7,892.3 795.6,892.3 795.6,930 1018.75,930" fill="none" stroke="#050505" stroke-width="2.45" stroke-linejoin="round"/>
<polygon points="394.3,556 423.75,556 423.75,573 606.2,573 606.2,556.2 614.6,556.2 614.6,610.5 606.2,610.5 606.2,581.5 423.75,581.5 423.75,692.2 473,692.2 473,721 394.3,721" fill="none" stroke="#050505" stroke-width="2.45" stroke-linejoin="round"/>
<polygon points="553.6,692.2 606.2,692.2 606.2,663.4 614.5,663.4 614.5,692.2 683,692.2 683,700.3 607.5,700.3 607.5,759.5 579,759.5 579,721 553.6,721" fill="none" stroke="#050505" stroke-width="2.45" stroke-linejoin="round"/>
<polygon points="690.5,570 777,570 777,607 690.5,607" fill="none" stroke="#050505" stroke-width="2.45" stroke-linejoin="round"/>
<polygon points="340.1,705.5 340.1,322.8 728.8,322.8 777,238.3 946.1,238.3 995.1,322.8 1101.8,322.8 1101.8,535 1186,582.5 1186,753.75 1101.8,800.75 1101.8,1012.8 713,1012.8 713,974.5 594.2,974.5 594.2,920 767.7,920 767.7,957.8 1047.2,957.8 1047.2,770 1132.5,721 1132.5,615.5 1047.2,566 1047.2,377.75 963.1,377.75 914.8,292.8 808.6,292.8 760.3,377.75 395,377.75 395,705.5" fill="#000"/>
<rect x="1176.5" y="937" width="59.5" height="18.5" fill="#fbed05" stroke="#4a4a20" stroke-width="1"/>
<path d="M101.5 1052V1082.5H131" stroke="#5b6168" stroke-width="1.3" fill="none"/>
<text x="102.5" y="1054.5" font-family="Liberation Sans, sans-serif" font-size="12" fill="#555b62">y</text>
<text x="132.5" y="1084" font-family="Liberation Sans, sans-serif" font-size="12" fill="#555b62">x</text>
<path d="M1084 826.8V841.4L1087.3 838.3L1090 843.4H1092.4L1090 837H1094.4Z" fill="#fff" stroke="#000" stroke-width="0.8" stroke-linejoin="round"/>
<rect x="64" y="162" width="47.6" height="18.6" fill="#90a9ca"/>
<text x="73" y="176" font-family="Liberation Sans, sans-serif" font-size="12" fill="#101c30" textLength="19.8" lengthAdjust="spacingAndGlyphs">Top</text>
<path d="M101.4 165V179.7" stroke="#0a0f1e" stroke-width="1.3"/><path d="M102.8 170h7.2l-3.6 3.9z" fill="#0a0a12"/>
</svg>
<svg style="left:60px;top:1116px" width="300" height="26" viewBox="60 1116 300 26">
<path d="M264.5 1119 L269.5 1131 Q272.5 1139 277.5 1139 H297.9 Q301.4 1139 301.4 1135.5 V1119Z" fill="#d3dae9" stroke="none"/><path d="M264.5 1119 L269.5 1131 Q272.5 1139 277.5 1139 H297.9 Q301.4 1139 301.4 1135.5 V1119" fill="none" stroke="#b4bccb" stroke-width="1"/>
<path d="M218.5 1119 L223.5 1131 Q226.5 1139 231.5 1139 H266.8 Q270.3 1139 270.3 1135.5 V1119Z" fill="#d3dae9" stroke="none"/><path d="M218.5 1119 L223.5 1131 Q226.5 1139 231.5 1139 H266.8 Q270.3 1139 270.3 1135.5 V1119" fill="none" stroke="#b4bccb" stroke-width="1"/>
<path d="M172.5 1119 L177.5 1131 Q180.5 1139 185.5 1139 H220.8 Q224.3 1139 224.3 1135.5 V1119Z" fill="#d3dae9" stroke="none"/><path d="M172.5 1119 L177.5 1131 Q180.5 1139 185.5 1139 H220.8 Q224.3 1139 224.3 1135.5 V1119" fill="none" stroke="#b4bccb" stroke-width="1"/>
<path d="M64.5 1119 L69.5 1131 Q72.5 1139 77.5 1139 H138.2 Q141.7 1139 141.7 1135.5 V1119Z" fill="#d3dae9" stroke="none"/><path d="M64.5 1119 L69.5 1131 Q72.5 1139 77.5 1139 H138.2 Q141.7 1139 141.7 1135.5 V1119" fill="none" stroke="#b4bccb" stroke-width="1"/>
<path d="M133 1119 L148 1137 Q149.5 1139 152 1139 H174.7 Q178.2 1139 178.2 1135.5 V1119Z" fill="#fdfdfe" stroke="none"/><path d="M133 1119 L148 1137 Q149.5 1139 152 1139 H174.7 Q178.2 1139 178.2 1135.5 V1119" fill="none" stroke="#c9ced8" stroke-width="1"/>
<path d="M286.9 1126.2h2.6v3.1h3.1v2.6h-3.1v3.1h-2.6v-3.1h-3.1v-2.6h3.1z" fill="#eef0f5" stroke="#5f646c" stroke-width="0.9"/>
</svg>
<span class="t " id="vt0" style="left:75.3px;top:1120.3px;font-size:12px;color:#1a1a1a;letter-spacing:-0.255px;">Perspective</span>
<span class="t " id="vt1" style="left:152.2px;top:1120.3px;font-size:12px;color:#1a1a1a;letter-spacing:-0.020px;">Top</span>
<span class="t " id="vt2" style="left:190.4px;top:1120.3px;font-size:12px;color:#1a1a1a;letter-spacing:-0.043px;">Front</span>
<span class="t " id="vt3" style="left:236.4px;top:1120.3px;font-size:12px;color:#1a1a1a;letter-spacing:-0.043px;">Right</span>
<svg style="left:0;top:1148px" width="700" height="20" viewBox="0 1148 700 20">
<rect x="5.5" y="1150.5" width="12" height="12" fill="#fff" stroke="#333"/>
<path d="M8 1156.5l2.6 2.8 5-5.6" fill="none" stroke="#222" stroke-width="1.2"/>
<rect x="49.5" y="1150.5" width="12" height="12" fill="#fff" stroke="#333"/>
<path d="M52 1156.5l2.6 2.8 5-5.6" fill="none" stroke="#222" stroke-width="1.2"/>
<rect x="97.5" y="1150.5" width="12" height="12" fill="#fff" stroke="#333"/>
<path d="M100 1156.5l2.6 2.8 5-5.6" fill="none" stroke="#222" stroke-width="1.2"/>
<rect x="146.5" y="1150.5" width="12" height="12" fill="#fff" stroke="#333"/>
<path d="M149 1156.5l2.6 2.8 5-5.6" fill="none" stroke="#222" stroke-width="1.2"/>
<rect x="188.5" y="1150.5" width="12" height="12" fill="#fff" stroke="#333"/>
<rect x="232.5" y="1150.5" width="12" height="12" fill="#fff" stroke="#333"/>
<rect x="269.5" y="1150.5" width="12" height="12" fill="#fff" stroke="#333"/>
<path d="M272 1156.5l2.6 2.8 5-5.6" fill="none" stroke="#222" stroke-width="1.2"/>
<rect x="316.5" y="1150.5" width="12" height="12" fill="#fff" stroke="#333"/>
<rect x="360.5" y="1150.5" width="12" height="12" fill="#fff" stroke="#333"/>
<rect x="411.5" y="1150.5" width="12" height="12" fill="#fff" stroke="#333"/>
<rect x="458.5" y="1150.5" width="12" height="12" fill="#fff" stroke="#333"/>
<rect x="513.5" y="1150.5" width="12" height="12" fill="#e4e6ea" stroke="#c6c9ce"/>
<rect x="571.5" y="1150.5" width="12" height="12" fill="#e4e6ea" stroke="#c6c9ce"/>
</svg>
<span class="t " id="os0" style="left:23px;top:1147px;font-size:11px;color:#111;letter-spacing:-0.526px;">End</span>
<span class="t " id="os1" style="left:67px;top:1147px;font-size:11px;color:#111;letter-spacing:-0.211px;">Near</span>
<span class="t " id="os2" style="left:115px;top:1147px;font-size:11px;color:#111;letter-spacing:-0.416px;">Point</span>
<span class="t " id="os3" style="left:164px;top:1147px;font-size:11px;color:#111;letter-spacing:-0.578px;">Mid</span>
<span class="t " id="os4" style="left:206px;top:1147px;font-size:11px;color:#111;letter-spacing:-0.729px;">Cen</span>
<span class="t " id="os5" style="left:250px;top:1147px;font-size:11px;color:#111;letter-spacing:-0.411px;">Int</span>
<span class="t " id="os6" style="left:287px;top:1147px;font-size:11px;color:#111;letter-spacing:-0.312px;">Perp</span>
<span class="t " id="os7" style="left:334px;top:1147px;font-size:11px;color:#111;letter-spacing:0.083px;">Tan</span>
<span class="t " id="os8" style="left:378px;top:1147px;font-size:11px;color:#111;letter-spacing:-0.230px;">Quad</span>
<span class="t " id="os9" style="left:429px;top:1147px;font-size:11px;color:#111;letter-spacing:-0.410px;">Knot</span>
<span class="t " id="os10" style="left:476px;top:1147px;font-size:11px;color:#111;letter-spacing:-0.198px;">Vertex</span>
<span class="t " id="os11" style="left:531px;top:1147px;font-size:11px;color:#111;letter-spacing:-0.321px;">Project</span>
<span class="t " id="os12" style="left:589px;top:1147px;font-size:11px;color:#111;letter-spacing:-0.241px;">Disable</span>
<div class="b" style="left:0;top:1180.2px;width:1920px;height:20px;background:#dee2e9;border-top:1px solid #a0a6ae"></div>
<div class="b" style="left:1px;top:1181.2px;width:56px;height:18px;background:#dee2e9;border-right:1px solid #a9aeb6"></div>
<span class="t " id="sb0" style="left:8px;top:1180.5px;font-size:12px;color:#111;letter-spacing:-0.060px;">CPlane</span>
<div class="b" style="left:58px;top:1181.2px;width:87px;height:18px;background:#dee2e9;border-right:1px solid #a9aeb6"></div>
<span class="t " id="sb1" style="left:81px;top:1180.5px;font-size:12px;color:#111;letter-spacing:-0.054px;">x 7.266</span>
<div class="b" style="left:146px;top:1181.2px;width:87px;height:18px;background:#dee2e9;border-right:1px solid #a9aeb6"></div>
<span class="t " id="sb2" style="left:167px;top:1180.5px;font-size:12px;color:#111;letter-spacing:-0.045px;">y -3.455</span>
<div class="b" style="left:234px;top:1181.2px;width:87px;height:18px;background:#dee2e9;border-right:1px solid #a9aeb6"></div>
<span class="t " id="sb3" style="left:257px;top:1180.5px;font-size:12px;color:#111;letter-spacing:-0.054px;">z 0.000</span>
<div class="b" style="left:322px;top:1181.2px;width:87px;height:18px;background:#dee2e9;border-right:1px solid #a9aeb6"></div>
<span class="t " id="sb4" style="left:346px;top:1180.5px;font-size:12px;color:#111;letter-spacing:-0.115px;">Meters</span>
<div class="b" style="left:410px;top:1181.2px;width:172px;height:18px;background:#dee2e9;border-right:1px solid #a9aeb6"></div>
<div class="b" style="left:583px;top:1181.2px;width:75px;height:18px;background:#dee2e9;border-right:1px solid #a9aeb6"></div>
<span class="t " id="sb6" style="left:593px;top:1180.5px;font-size:12px;color:#111;letter-spacing:-0.115px;">Grid Snap</span>
<div class="b" style="left:658.5px;top:1181.2px;width:46.5px;height:18px;background:#e4eefa;border-right:1px solid #a9aeb6"></div>
<span class="t " id="sb7" style="left:665px;top:1180.5px;font-size:12px;color:#111;font-weight:bold;letter-spacing:-0.134px;">Ortho</span>
<div class="b" style="left:705px;top:1181.2px;width:54px;height:18px;background:#e4eefa;border-right:1px solid #a9aeb6"></div>
<span class="t " id="sb8" style="left:713px;top:1180.5px;font-size:12px;color:#111;font-weight:bold;letter-spacing:0.052px;">Planar</span>
<div class="b" style="left:759px;top:1181.2px;width:54px;height:18px;background:#e4eefa;border-right:1px solid #a9aeb6"></div>
<span class="t " id="sb9" style="left:767px;top:1180.5px;font-size:12px;color:#111;font-weight:bold;letter-spacing:-0.069px;">Osnap</span>
<div class="b" style="left:813px;top:1181.2px;width:85.5px;height:18px;background:#dee2e9;border-right:1px solid #a9aeb6"></div>
<span class="t " id="sb10" style="left:824px;top:1180.5px;font-size:12px;color:#111;letter-spacing:0.144px;">SmartTrack</span>
<div class="b" style="left:898.5px;top:1181.2px;width:66.0px;height:18px;background:#e4eefa;border-right:1px solid #a9aeb6"></div>
<span class="t " id="sb11" style="left:908px;top:1180.5px;font-size:12px;color:#111;font-weight:bold;letter-spacing:-0.288px;">Gumball</span>
<div class="b" style="left:964.5px;top:1181.2px;width:109.0px;height:18px;background:#dee2e9;border-right:1px solid #a9aeb6"></div>
<span class="t " id="sb12" style="left:978px;top:1180.5px;font-size:12px;color:#111;letter-spacing:0.117px;">Record History</span>
<div class="b" style="left:1073.5px;top:1181.2px;width:44.5px;height:18px;background:#dee2e9;border-right:1px solid #a9aeb6"></div>
<span class="t " id="sb13" style="left:1081px;top:1180.5px;font-size:12px;color:#111;letter-spacing:0.055px;">Filter</span>
<div class="b" style="left:412px;top:1185px;width:14px;height:14px;background:#fff;border:1px solid #333"></div>
<span class="t " id="sbv" style="left:428px;top:1180.5px;font-size:12px;color:#111;letter-spacing:-0.021px;">Varies</span>
<span class="t " id="sbm" style="left:1121px;top:1180.5px;font-size:12px;color:#111;letter-spacing:0.113px;">Minutes from last save: 37</span>
<div class="b" style="left:1912px;top:1181.2px;width:1px;height:18px;background:#a9aeb6"></div>
<div class="b" style="left:0;top:1198.6px;width:1920px;height:1.4px;background:#bbe8b7"></div>
<svg style="left:1500px;top:160px" width="420" height="30" viewBox="1500 160 420 30">
<path d="M1717 185.5 V167.5 Q1717 165 1720 165 H1768.7 Q1771.2 165 1772.2 167 L1782.9 185.5" fill="#d1d8e7" stroke="#a7adb8" stroke-width="1"/>
<path d="M1649.7 185.5 V167.5 Q1649.7 165 1652.7 165 H1703.5 Q1706.0 165 1707.0 167 L1717.7 185.5" fill="#d1d8e7" stroke="#a7adb8" stroke-width="1"/>
<path d="M1584.6 185.5 V167.5 Q1584.6 165 1587.6 165 H1636 Q1638.5 165 1639.5 167 L1650.2 185.5" fill="#d1d8e7" stroke="#a7adb8" stroke-width="1"/>
</svg>
<div class="b" style="left:1503px;top:185px;width:416px;height:953px;background:#f3f3f8;border:1px solid #9a9fa6"></div>
<svg style="left:1500px;top:160px" width="420" height="30" viewBox="1500 160 420 30">
<path d="M1504 186.5 V167.5 Q1504 165 1507 165 H1578 Q1580.5 165 1582 167 L1594.6 186.5Z" fill="#f3f3f8" stroke="none"/><path d="M1504 186.5 V167.5 Q1504 165 1507 165 H1578 Q1580.5 165 1582 167 L1594.6 186.5" fill="none" stroke="#9a9fa6" stroke-width="1"/>
<defs><linearGradient id="lay" x1="0" y1="0" x2="1" y2="1"><stop offset="0" stop-color="#ff9a3c"/><stop offset="1" stop-color="#e04a10"/></linearGradient></defs><path d="M1515.50 169.50A5.2 5.2 0 0 1 1519.36 171.21" fill="none" stroke="#e8382f" stroke-width="2.6"/><path d="M1519.18 171.02A5.2 5.2 0 0 1 1520.69 174.96" fill="none" stroke="#f08a1c" stroke-width="2.6"/><path d="M1520.70 174.70A5.2 5.2 0 0 1 1518.99 178.56" fill="none" stroke="#f2d21a" stroke-width="2.6"/><path d="M1519.18 178.38A5.2 5.2 0 0 1 1515.24 179.89" fill="none" stroke="#5cb83a" stroke-width="2.6"/><path d="M1515.50 179.90A5.2 5.2 0 0 1 1511.64 178.19" fill="none" stroke="#2aa7c9" stroke-width="2.6"/><path d="M1511.82 178.38A5.2 5.2 0 0 1 1510.31 174.44" fill="none" stroke="#3a55c8" stroke-width="2.6"/><path d="M1510.30 174.70A5.2 5.2 0 0 1 1512.01 170.84" fill="none" stroke="#7a3ab8" stroke-width="2.6"/><path d="M1511.82 171.02A5.2 5.2 0 0 1 1515.76 169.51" fill="none" stroke="#c832a0" stroke-width="2.6"/><circle cx="1515.5" cy="174.7" r="3.6" fill="#fff"/><path d="M1589.5 167.3L1603.5 170.8V176.5L1597.5 180.5L1591.5 177.5Z" fill="url(#lay)" stroke="#8a2a08" stroke-width="0.8"/><path d="M1591 175L1597.5 178.6L1603.5 174.6V178.8L1597.5 183L1591 179.5Z" fill="#2a3a6a"/><path d="M1591 173.5L1597.5 177.3L1603.5 173.3" stroke="#fff" stroke-width="1" fill="none"/><rect x="1655.5" y="168.5" width="13" height="10" fill="#cfd3d8" stroke="#222" stroke-width="1.4"/><rect x="1657" y="170" width="10" height="7" fill="#e9ecef"/><path d="M1659 180.5h6v1.5h-6z" fill="#222"/><path d="M1657.5 182.5h9" stroke="#222" stroke-width="1.2"/><rect x="1723.5" y="168.5" width="14" height="13.5" fill="#4a62d0" stroke="#8a8fa8" stroke-width="1"/><rect x="1723.5" y="168.5" width="14" height="3" fill="#dfe3f0"/><text x="1727" y="181" font-family="Liberation Sans, sans-serif" font-size="10.5" font-weight="bold" fill="#fff">?</text>
</svg>
<span class="t " id="pt0" style="left:1526.5px;top:165px;font-size:12px;color:#111;letter-spacing:-0.470px;">Properties</span>
<span class="t " id="pt1" style="left:1607px;top:165px;font-size:12px;color:#111;letter-spacing:-0.422px;">Layers</span>
<span class="t " id="pt2" style="left:1672.5px;top:165px;font-size:12px;color:#111;letter-spacing:-0.266px;">Display</span>
<span class="t " id="pt3" style="left:1740px;top:165px;font-size:12px;color:#111;letter-spacing:-0.297px;">Help</span>
<div class="b" style="left:1507.5px;top:194.6px;width:405.0px;height:413px;background:#fdfdfe"></div>
<div class="b" style="left:1507.5px;top:194.6px;width:405.0px;height:21.8px;background:#f2f2f7;border-bottom:1px solid #e3e4ea"></div>
<span class="t " id="ph1" style="left:1511px;top:194.9px;font-size:11px;color:#111;letter-spacing:-0.451px;">Viewport</span>
<div class="b" style="left:1507.5px;top:216.4px;width:8px;height:19px;background:#f0f0f5"></div>
<div class="b" style="left:1507.5px;top:234.4px;width:405.0px;height:1px;background:#e3e4ea"></div>
<div class="b" style="left:1710.0px;top:216.4px;width:1px;height:19px;background:#e3e4ea"></div>
<span class="t " id="pl2" style="left:1520.5px;top:216.0px;font-size:11px;color:#111;letter-spacing:-0.275px;">Title</span>
<span class="t " id="pv2" style="left:1715px;top:216.0px;font-size:11px;color:#111;letter-spacing:0.083px;">Top</span>
<div class="b" style="left:1507.5px;top:235.4px;width:8px;height:19px;background:#f0f0f5"></div>
<div class="b" style="left:1507.5px;top:253.4px;width:405.0px;height:1px;background:#e3e4ea"></div>
<div class="b" style="left:1710.5px;top:235.4px;width:202.0px;height:18px;background:#dfe3ea"></div>
<div class="b" style="left:1710.0px;top:235.4px;width:1px;height:19px;background:#e3e4ea"></div>
<span class="t " id="pl3" style="left:1520.5px;top:235.0px;font-size:11px;color:#7b7b80;letter-spacing:-0.225px;">Width</span>
<span class="t " id="pv3" style="left:1715px;top:235.0px;font-size:11px;color:#8a8a90;letter-spacing:-0.121px;">1430</span>
<div class="b" style="left:1507.5px;top:254.4px;width:8px;height:19px;background:#f0f0f5"></div>
<div class="b" style="left:1507.5px;top:272.4px;width:405.0px;height:1px;background:#e3e4ea"></div>
<div class="b" style="left:1710.5px;top:254.4px;width:202.0px;height:18px;background:#dfe3ea"></div>
<div class="b" style="left:1710.0px;top:254.4px;width:1px;height:19px;background:#e3e4ea"></div>
<span class="t " id="pl4" style="left:1520.5px;top:254.0px;font-size:11px;color:#7b7b80;letter-spacing:-0.299px;">Height</span>
<span class="t " id="pv4" style="left:1715px;top:254.0px;font-size:11px;color:#8a8a90;letter-spacing:-0.120px;">955</span>
<div class="b" style="left:1507.5px;top:273.4px;width:8px;height:19px;background:#f0f0f5"></div>
<div class="b" style="left:1507.5px;top:291.4px;width:405.0px;height:1px;background:#e3e4ea"></div>
<div class="b" style="left:1710.0px;top:273.4px;width:1px;height:19px;background:#e3e4ea"></div>
<span class="t " id="pl5" style="left:1520.5px;top:273.0px;font-size:11px;color:#111;letter-spacing:-0.292px;">Projection</span>
<span class="t " id="pv5" style="left:1714.5px;top:273.0px;font-size:11px;color:#111;letter-spacing:-0.461px;">Parallel</span>
<div class="b" style="left:1894.5px;top:273.4px;width:18px;height:19px;background:#e6e7ea;border:1px solid #b9bbc0"></div>
<svg style="left:1894.5px;top:273.4px" width="18" height="19" viewBox="0 0 18 19"><path d="M5 7.5l4 4 4-4" fill="none" stroke="#333" stroke-width="1.1"/></svg>
<div class="b" style="left:1507.5px;top:292.4px;width:405.0px;height:22.7px;background:#f2f2f7;border-bottom:1px solid #e3e4ea"></div>
<span class="t " id="ph6" style="left:1511px;top:294.05px;font-size:11px;color:#111;letter-spacing:-0.521px;">Camera</span>
<div class="b" style="left:1507.5px;top:315.09999999999997px;width:8px;height:19px;background:#f0f0f5"></div>
<div class="b" style="left:1507.5px;top:333.09999999999997px;width:405.0px;height:1px;background:#e3e4ea"></div>
<div class="b" style="left:1710.5px;top:315.09999999999997px;width:202.0px;height:18px;background:#dfe3ea"></div>
<div class="b" style="left:1710.0px;top:315.09999999999997px;width:1px;height:19px;background:#e3e4ea"></div>
<span class="t " id="pl7" style="left:1520.5px;top:314.7px;font-size:11px;color:#7b7b80;letter-spacing:-0.233px;">Lens Length</span>
<span class="t " id="pv7" style="left:1715px;top:314.7px;font-size:11px;color:#8a8a90;letter-spacing:-0.105px;">50.0</span>
<div class="b" style="left:1507.5px;top:334.09999999999997px;width:8px;height:19px;background:#f0f0f5"></div>
<div class="b" style="left:1507.5px;top:352.09999999999997px;width:405.0px;height:1px;background:#e3e4ea"></div>
<div class="b" style="left:1710.0px;top:334.09999999999997px;width:1px;height:19px;background:#e3e4ea"></div>
<span class="t " id="pl8" style="left:1520.5px;top:333.7px;font-size:11px;color:#111;letter-spacing:-0.248px;">Rotation</span>
<span class="t " id="pv8" style="left:1715px;top:333.7px;font-size:11px;color:#111;letter-spacing:-0.105px;">90.0</span>
<div class="b" style="left:1507.5px;top:353.09999999999997px;width:8px;height:19px;background:#f0f0f5"></div>
<div class="b" style="left:1507.5px;top:371.09999999999997px;width:405.0px;height:1px;background:#e3e4ea"></div>
<div class="b" style="left:1710.0px;top:353.09999999999997px;width:1px;height:19px;background:#e3e4ea"></div>
<span class="t " id="pl9" style="left:1520.5px;top:352.7px;font-size:11px;color:#111;letter-spacing:-0.198px;">X Location</span>
<span class="t " id="pv9" style="left:1715px;top:352.7px;font-size:11px;color:#111;letter-spacing:-0.106px;">1.568</span>
<div class="b" style="left:1507.5px;top:372.09999999999997px;width:8px;height:19px;background:#f0f0f5"></div>
<div class="b" style="left:1507.5px;top:390.09999999999997px;width:405.0px;height:1px;background:#e3e4ea"></div>
<div class="b" style="left:1710.0px;top:372.09999999999997px;width:1px;height:19px;background:#e3e4ea"></div>
<span class="t " id="pl10" style="left:1520.5px;top:371.7px;font-size:11px;color:#111;letter-spacing:-0.180px;">Y Location</span>
<span class="t " id="pv10" style="left:1715px;top:371.7px;font-size:11px;color:#111;letter-spacing:-0.106px;">0.015</span>
<div class="b" style="left:1507.5px;top:391.09999999999997px;width:8px;height:19px;background:#f0f0f5"></div>
<div class="b" style="left:1507.5px;top:409.09999999999997px;width:405.0px;height:1px;background:#e3e4ea"></div>
<div class="b" style="left:1710.0px;top:391.09999999999997px;width:1px;height:19px;background:#e3e4ea"></div>
<span class="t " id="pl11" style="left:1520.5px;top:390.7px;font-size:11px;color:#111;letter-spacing:-0.138px;">Z Location</span>
<span class="t " id="pv11" style="left:1715px;top:390.7px;font-size:11px;color:#111;letter-spacing:-0.109px;">236.529</span>
<div class="b" style="left:1507.5px;top:410.09999999999997px;width:8px;height:19px;background:#f0f0f5"></div>
<div class="b" style="left:1507.5px;top:428.09999999999997px;width:405.0px;height:1px;background:#e3e4ea"></div>
<div class="b" style="left:1710.0px;top:410.09999999999997px;width:1px;height:19px;background:#e3e4ea"></div>
<span class="t " id="pl12" style="left:1520.5px;top:409.7px;font-size:11px;color:#111;letter-spacing:-0.199px;">Location</span>
<div class="b" style="left:1712.5px;top:411.09999999999997px;width:200px;height:16.5px;background:#e1e1e1;border:1px solid #adadad"></div>
<span class="t " id="pb12" style="left:1795px;top:409.49999999999994px;font-size:11px;color:#111;letter-spacing:-0.086px;">Place...</span>
<div class="b" style="left:1507.5px;top:429.09999999999997px;width:405.0px;height:22.7px;background:#f2f2f7;border-bottom:1px solid #e3e4ea"></div>
<span class="t " id="ph13" style="left:1511px;top:430.75px;font-size:11px;color:#111;letter-spacing:-0.096px;">Target</span>
<div class="b" style="left:1507.5px;top:451.79999999999995px;width:8px;height:19px;background:#f0f0f5"></div>
<div class="b" style="left:1507.5px;top:469.79999999999995px;width:405.0px;height:1px;background:#e3e4ea"></div>
<div class="b" style="left:1710.0px;top:451.79999999999995px;width:1px;height:19px;background:#e3e4ea"></div>
<span class="t " id="pl14" style="left:1520.5px;top:451.4px;font-size:11px;color:#111;letter-spacing:-0.098px;">X Target</span>
<span class="t " id="pv14" style="left:1715px;top:451.4px;font-size:11px;color:#111;letter-spacing:-0.106px;">1.568</span>
<div class="b" style="left:1507.5px;top:470.79999999999995px;width:8px;height:19px;background:#f0f0f5"></div>
<div class="b" style="left:1507.5px;top:488.79999999999995px;width:405.0px;height:1px;background:#e3e4ea"></div>
<div class="b" style="left:1710.0px;top:470.79999999999995px;width:1px;height:19px;background:#e3e4ea"></div>
<span class="t " id="pl15" style="left:1520.5px;top:470.4px;font-size:11px;color:#111;letter-spacing:-0.072px;">Y Target</span>
<span class="t " id="pv15" style="left:1715px;top:470.4px;font-size:11px;color:#111;letter-spacing:-0.106px;">0.015</span>
<div class="b" style="left:1507.5px;top:489.79999999999995px;width:8px;height:19px;background:#f0f0f5"></div>
<div class="b" style="left:1507.5px;top:507.79999999999995px;width:405.0px;height:1px;background:#e3e4ea"></div>
<div class="b" style="left:1710.0px;top:489.79999999999995px;width:1px;height:19px;background:#e3e4ea"></div>
<span class="t " id="pl16" style="left:1520.5px;top:489.4px;font-size:11px;color:#111;letter-spacing:-0.020px;">Z Target</span>
<span class="t " id="pv16" style="left:1715px;top:489.4px;font-size:11px;color:#111;letter-spacing:-0.106px;">0.000</span>
<div class="b" style="left:1507.5px;top:508.79999999999995px;width:8px;height:19px;background:#f0f0f5"></div>
<div class="b" style="left:1507.5px;top:526.8px;width:405.0px;height:1px;background:#e3e4ea"></div>
<div class="b" style="left:1710.0px;top:508.79999999999995px;width:1px;height:19px;background:#e3e4ea"></div>
<span class="t " id="pl17" style="left:1520.5px;top:508.4px;font-size:11px;color:#111;letter-spacing:-0.199px;">Location</span>
<div class="b" style="left:1712.5px;top:509.79999999999995px;width:200px;height:16.5px;background:#e1e1e1;border:1px solid #adadad"></div>
<span class="t " id="pb17" style="left:1795px;top:508.19999999999993px;font-size:11px;color:#111;letter-spacing:-0.086px;">Place...</span>
<div class="b" style="left:1507.5px;top:527.8px;width:405.0px;height:22.7px;background:#f2f2f7;border-bottom:1px solid #e3e4ea"></div>
<span class="t " id="ph18" style="left:1511px;top:529.4499999999999px;font-size:11px;color:#111;letter-spacing:-0.125px;">Wallpaper</span>
<div class="b" style="left:1507.5px;top:550.5px;width:8px;height:19px;background:#f0f0f5"></div>
<div class="b" style="left:1507.5px;top:568.5px;width:405.0px;height:1px;background:#e3e4ea"></div>
<div class="b" style="left:1710.0px;top:550.5px;width:1px;height:19px;background:#e3e4ea"></div>
<span class="t " id="pl19" style="left:1520.5px;top:550.1px;font-size:11px;color:#111;letter-spacing:-0.531px;">Filename</span>
<span class="t " id="pv19" style="left:1713px;top:550.1px;font-size:11px;color:#111;letter-spacing:-0.299px;">(none)</span>
<div class="b" style="left:1895.5px;top:552.0px;width:17px;height:16px;background:#e1e1e1;border:1px solid #adadad"></div>
<span class="t " id="pd19" style="left:1899.5px;top:549.0px;font-size:11px;color:#111;letter-spacing:-0.057px;">...</span>
<div class="b" style="left:1507.5px;top:569.5px;width:8px;height:19px;background:#f0f0f5"></div>
<div class="b" style="left:1507.5px;top:587.5px;width:405.0px;height:1px;background:#e3e4ea"></div>
<div class="b" style="left:1710.0px;top:569.5px;width:1px;height:19px;background:#e3e4ea"></div>
<span class="t " id="pl20" style="left:1520.5px;top:569.1px;font-size:11px;color:#111;letter-spacing:-0.383px;">Show</span>
<svg style="left:1715px;top:572.0px" width="14" height="14" viewBox="0 0 14 14"><rect x="0.5" y="0.5" width="12" height="12" fill="#fff" stroke="#333"/><path d="M3 6.5l2.6 2.8 5-5.8" fill="none" stroke="#222" stroke-width="1.2"/></svg>
<div class="b" style="left:1507.5px;top:588.5px;width:8px;height:19px;background:#f0f0f5"></div>
<div class="b" style="left:1507.5px;top:606.5px;width:405.0px;height:1px;background:#e3e4ea"></div>
<div class="b" style="left:1710.0px;top:588.5px;width:1px;height:19px;background:#e3e4ea"></div>
<span class="t " id="pl21" style="left:1520.5px;top:588.1px;font-size:11px;color:#111;letter-spacing:-0.461px;">Gray</span>
<svg style="left:1715px;top:591.0px" width="14" height="14" viewBox="0 0 14 14"><rect x="0.5" y="0.5" width="12" height="12" fill="#fff" stroke="#333"/><path d="M3 6.5l2.6 2.8 5-5.8" fill="none" stroke="#222" stroke-width="1.2"/></svg>
</div></body></html>
